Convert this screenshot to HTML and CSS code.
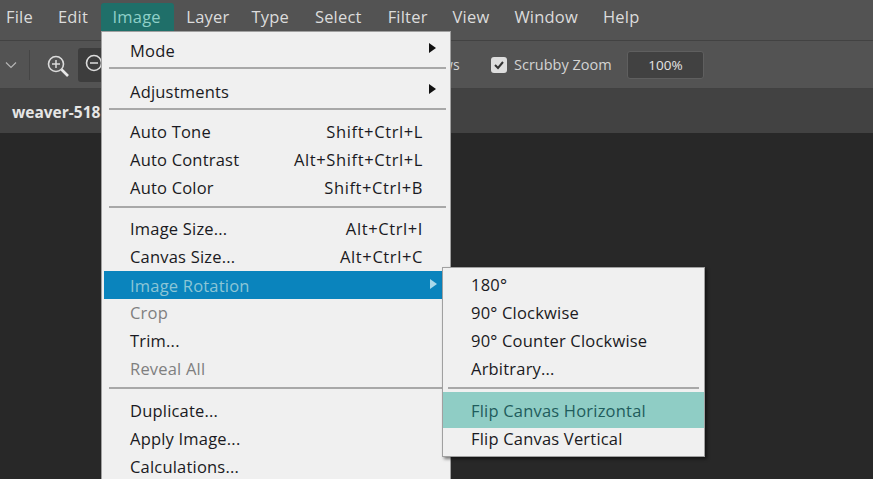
FILE: index.html
```html
<!DOCTYPE html>
<html lang="en">
<head>
<meta charset="utf-8">
<title>Image Rotation</title>
<link rel="stylesheet" href="styles.css">
</head>
<body>
<div class="app">
  <nav class="menubar">
    <span class="mb-item">File</span>
    <span class="mb-item">Edit</span>
    <span class="mb-item active">Image</span>
    <span class="mb-item mb-pull">Layer</span>
    <span class="mb-item mb-push">Type</span>
    <span class="mb-item mb-push">Select</span>
    <span class="mb-item">Filter</span>
    <span class="mb-item">View</span>
    <span class="mb-item">Window</span>
    <span class="mb-item">Help</span>
  </nav>
  <div class="toolbar">
    <svg class="chev" width="12" height="8" viewBox="0 0 12 8"><path d="M1 1.5l5 5 5-5" fill="none" stroke="#b5b5b5" stroke-width="1.2"/></svg>
    <span class="tool-sep"></span>
    <svg class="zoom-in" width="24" height="26" viewBox="0 0 24 26"><circle cx="10" cy="10" r="7.5" fill="none" stroke="#dcdcdc" stroke-width="1.6"/><path d="M10 6v8M6 10h8" stroke="#dcdcdc" stroke-width="1.5"/><path d="M15.5 15.5l6.5 6.5" stroke="#e8e8e8" stroke-width="2.6"/></svg>
    <span class="zoom-out-box"><svg width="24" height="26" viewBox="0 0 24 26"><circle cx="10" cy="10" r="7.5" fill="none" stroke="#dcdcdc" stroke-width="1.6"/><path d="M6 10h8" stroke="#dcdcdc" stroke-width="1.5"/></svg></span>
    <span class="ws">ws</span>
    <span class="check"><svg width="16" height="16" viewBox="0 0 16 16"><rect width="16" height="16" rx="3" fill="#dedede"/><path d="M4 8l3 3 5-6" fill="none" stroke="#333" stroke-width="2"/></svg></span>
    <span class="scrubby">Scrubby Zoom</span>
    <span class="pct">100%</span>
  </div>
  <div class="tabbar"><span class="tab">weaver-518</span></div>
  <div class="canvas"></div>
</div>

<div class="menu main-menu">
  <div class="row">Mode<i class="arrow"></i></div>
  <hr class="sep sep-low">
  <div class="row">Adjustments<i class="arrow"></i></div>
  <hr class="sep">
  <div class="row">Auto Tone<kbd>Shift+Ctrl+L</kbd></div>
  <div class="row">Auto Contrast<kbd>Alt+Shift+Ctrl+L</kbd></div>
  <div class="row">Auto Color<kbd>Shift+Ctrl+B</kbd></div>
  <hr class="sep sep-wide sep-tight">
  <div class="row">Image Size...<kbd>Alt+Ctrl+I</kbd></div>
  <div class="row">Canvas Size...<kbd>Alt+Ctrl+C</kbd></div>
  <div class="row selected">Image Rotation<i class="arrow"></i></div>
  <div class="row disabled">Crop</div>
  <div class="row">Trim...</div>
  <div class="row disabled">Reveal All</div>
  <hr class="sep sep-wide">
  <div class="row">Duplicate...</div>
  <div class="row">Apply Image...</div>
  <div class="row">Calculations...</div>
</div>

<div class="menu sub-menu">
  <div class="row">180°</div>
  <div class="row">90° Clockwise</div>
  <div class="row">90° Counter Clockwise</div>
  <div class="row">Arbitrary...</div>
  <hr class="sep">
  <div class="row flip-on">Flip Canvas Horizontal</div>
  <div class="row flip-off">Flip Canvas Vertical</div>
</div>
</body>
</html>
```

FILE: styles.css
```css
* { box-sizing: border-box; }
html, body { margin: 0; height: 100%; overflow: hidden; }
body {
  position: relative;
  font-family: "Open Sans", "Noto Sans", sans-serif;
  font-size: 16.5px;
  letter-spacing: 0.2px;
  background: #282828;
}
.app { display: flex; flex-direction: column; height: 479px; }
.menubar {
  height: 41px;
  display: flex;
  align-items: flex-start;
  padding: 3px 0 0 0;
  background: #535353;
  border-bottom: 1px solid #424242;
  color: #dcdcdc;
}
.mb-item { height: 28px; line-height: 28px; padding: 0 12.5px; }
.mb-item:first-child { padding-left: 6px; }
.mb-pull { margin-right: -3px; }
.mb-push { margin-right: 1px; }
.mb-item.active {
  background: #1f6f69;
  color: #8fd0c8;
  border-radius: 3px 3px 0 0;
  padding: 0 13px 0 12px;
}
.toolbar {
  height: 48px;
  display: flex;
  align-items: center;
  background: #535353;
  border-bottom: 1px solid #414141;
  color: #d4d4d4;
  font-size: 14px;
}
.chev { margin-left: 5px; }
.tool-sep { width: 1px; height: 30px; background: #454545; margin: 0 16px 0 12px; }
.zoom-in { margin-top: 4px; }
.zoom-out-box {
  display: flex;
  align-items: center;
  padding: 2px 0 0 6px;
  margin-left: 8px;
  width: 40px;
  height: 34px;
  background: #3d3d3d;
  border-radius: 3px;
}
.ws { margin-left: 324px; width: 24px; }
.check { display: flex; margin-left: 25px; }
.scrubby { margin-left: 7px; width: 111px; white-space: nowrap; font-size: 14.5px; letter-spacing: 0; }
.pct {
  width: 77px;
  height: 28px;
  line-height: 26px;
  text-align: center;
  background: #414141;
  border: 1px solid #5f5f5f;
  border-radius: 3px;
  color: #e4e4e4;
  margin-left: 2px;
  font-size: 13.5px;
  letter-spacing: 0;
}
.tabbar {
  height: 44px;
  background: #424242;
  color: #e6e6e6;
  display: flex;
  align-items: center;
  padding: 2px 0 0 12px;
  font-weight: 700;
  font-size: 15.5px;
  letter-spacing: 0;
}
.canvas { flex: 1; background: #282828; }

.menu {
  position: absolute;
  background: #f0f0f0;
  border: 1px solid #a0a0a0;
  color: #1a1a22;
}
.main-menu { left: 101px; top: 31px; width: 350px; height: 460px; padding: 5px 2px 0; }
.sub-menu { left: 442px; top: 267px; width: 263px; height: 190px; padding: 3px 0 0; box-shadow: 2px 2px 3px rgba(0,0,0,.5); }
.row {
  position: relative;
  display: flex;
  justify-content: space-between;
  height: 28px;
  line-height: 28px;
  padding: 0 25px 0 26px;
  white-space: nowrap;
}
.sub-menu .row { padding: 0 28px; }
.row kbd { font: inherit; letter-spacing: 0.6px; }
.sep { height: 2px; margin: 2px 2px 8px 5px; border: 0; background: #a8a8a8; }
.sep-low { margin-bottom: 9px; }
.sep-wide { margin-top: 4px; }
.sep-tight { margin-bottom: 7px; }
.sub-menu .sep { margin: 4px 5px 3px; }
.arrow {
  position: absolute;
  right: 12px;
  top: 6px;
  border-left: 7px solid #111;
  border-top: 5px solid transparent;
  border-bottom: 5px solid transparent;
}
.selected { background: #0a84bd; color: #8cc6d6; margin-right: 6px; line-height: 30px; }
.selected .arrow { border-left-color: #a9d9ea; right: 5px; top: 8px; }
.disabled { color: #7f7f7f; }
.sub-menu .flip-on { background: #8fcdc5; color: #1f5c5c; height: 36px; line-height: 37px; }
.sub-menu .flip-off { height: 22px; line-height: 22px; }
```
